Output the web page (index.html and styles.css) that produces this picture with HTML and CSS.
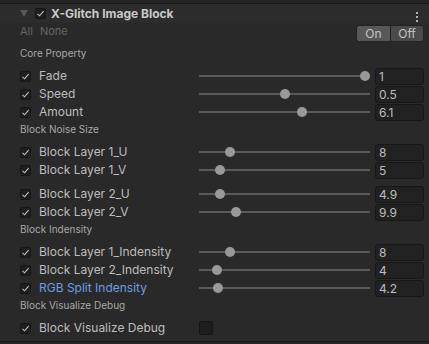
FILE: index.html
```html
<!DOCTYPE html>
<html lang="en">
<head>
    <meta charset="UTF-8">
    <title>X-Glitch Image Block</title>
    <link rel="stylesheet" href="styles.css">
</head>
<body>
    <div class="panel">
        <div class="header">
            <span class="foldout"></span>
            <span class="check"><svg viewBox="0 0 11 11"><path d="M2.5 5.8 L4.6 7.8 L8.6 3.2"/></svg></span>
            <span class="title">X-Glitch Image Block</span>
            <span class="kebab"><i></i><i></i><i></i></span>
        </div>

        <div class="toolbar">
            <div class="links"><span>All</span><span>None</span></div>
            <div class="toggle"><span class="on">On</span><span class="off">Off</span></div>
        </div>

        <div class="section">Core Property</div>
        <div class="row">
            <span class="check"><svg viewBox="0 0 11 11"><path d="M2.5 5.8 L4.6 7.8 L8.6 3.2"/></svg></span>
            <span class="label">Fade</span>
            <div class="slider"><span class="thumb" style="--v:1"></span></div>
            <div class="field">1</div>
        </div>
        <div class="row">
            <span class="check"><svg viewBox="0 0 11 11"><path d="M2.5 5.8 L4.6 7.8 L8.6 3.2"/></svg></span>
            <span class="label">Speed</span>
            <div class="slider"><span class="thumb" style="--v:0.5"></span></div>
            <div class="field">0.5</div>
        </div>
        <div class="row">
            <span class="check"><svg viewBox="0 0 11 11"><path d="M2.5 5.8 L4.6 7.8 L8.6 3.2"/></svg></span>
            <span class="label">Amount</span>
            <div class="slider"><span class="thumb" style="--v:0.61"></span></div>
            <div class="field">6.1</div>
        </div>

        <div class="section">Block Noise Size</div>
        <div class="row">
            <span class="check"><svg viewBox="0 0 11 11"><path d="M2.5 5.8 L4.6 7.8 L8.6 3.2"/></svg></span>
            <span class="label">Block Layer 1_U</span>
            <div class="slider"><span class="thumb" style="--v:0.16"></span></div>
            <div class="field">8</div>
        </div>
        <div class="row">
            <span class="check"><svg viewBox="0 0 11 11"><path d="M2.5 5.8 L4.6 7.8 L8.6 3.2"/></svg></span>
            <span class="label">Block Layer 1_V</span>
            <div class="slider"><span class="thumb" style="--v:0.1"></span></div>
            <div class="field">5</div>
        </div>
        <div class="row spaced">
            <span class="check"><svg viewBox="0 0 11 11"><path d="M2.5 5.8 L4.6 7.8 L8.6 3.2"/></svg></span>
            <span class="label">Block Layer 2_U</span>
            <div class="slider"><span class="thumb" style="--v:0.098"></span></div>
            <div class="field">4.9</div>
        </div>
        <div class="row">
            <span class="check"><svg viewBox="0 0 11 11"><path d="M2.5 5.8 L4.6 7.8 L8.6 3.2"/></svg></span>
            <span class="label">Block Layer 2_V</span>
            <div class="slider"><span class="thumb" style="--v:0.198"></span></div>
            <div class="field">9.9</div>
        </div>

        <div class="section">Block Indensity</div>
        <div class="row">
            <span class="check"><svg viewBox="0 0 11 11"><path d="M2.5 5.8 L4.6 7.8 L8.6 3.2"/></svg></span>
            <span class="label">Block Layer 1_Indensity</span>
            <div class="slider"><span class="thumb" style="--v:0.16"></span></div>
            <div class="field">8</div>
        </div>
        <div class="row">
            <span class="check"><svg viewBox="0 0 11 11"><path d="M2.5 5.8 L4.6 7.8 L8.6 3.2"/></svg></span>
            <span class="label">Block Layer 2_Indensity</span>
            <div class="slider"><span class="thumb" style="--v:0.08"></span></div>
            <div class="field">4</div>
        </div>
        <div class="row">
            <span class="check"><svg viewBox="0 0 11 11"><path d="M2.5 5.8 L4.6 7.8 L8.6 3.2"/></svg></span>
            <span class="label link">RGB Split Indensity</span>
            <div class="slider"><span class="thumb" style="--v:0.084"></span></div>
            <div class="field">4.2</div>
        </div>

        <div class="section">Block Visualize Debug</div>
        <div class="row last">
            <span class="check"><svg viewBox="0 0 11 11"><path d="M2.5 5.8 L4.6 7.8 L8.6 3.2"/></svg></span>
            <span class="label">Block Visualize Debug</span>
            <span class="toggle-box"></span>
        </div>
    </div>
</body>
</html>
```

FILE: styles.css
```css
body {
    margin: 0;
    background-color: #262626;
    font-family: Inter, "Noto Sans", sans-serif;
    color: #bdbdbd;
}
.panel {
    margin-top: 3px;
    border-top: 1px solid #1a1a1a;
    border-bottom: 1px solid #1a1a1a;
    background-color: #292929;
    padding-bottom: 4px;
}
.header {
    display: flex;
    align-items: center;
    height: 19px;
    padding-left: 20px;
    background-color: #2c2c2c;
}
.foldout {
    width: 0;
    height: 0;
    border-left: 4px solid transparent;
    border-right: 4px solid transparent;
    border-top: 7px solid #585858;
    margin-right: 7px;
}
.check {
    display: inline-block;
    box-sizing: border-box;
    width: 11px;
    height: 11px;
    background-color: #1e1e1e;
    border: 1px solid #161616;
    border-radius: 2px;
    flex-shrink: 0;
}
.check svg {
    display: block;
    width: 11px;
    height: 11px;
    margin: -1px;
    fill: none;
    stroke: #c0c0c0;
    stroke-width: 1.1;
}
.title {
    margin-left: 5px;
    font-size: 12px;
    font-weight: 700;
    color: #c8c8c8;
    flex: 1;
}
.kebab {
    display: flex;
    flex-direction: column;
    gap: 2px;
    margin: 6px 11px 0 0;
}
.kebab i {
    display: block;
    width: 2px;
    height: 2px;
    background-color: #b0b0b0;
}
.toolbar {
    display: flex;
    justify-content: space-between;
    align-items: flex-start;
    height: 22px;
    padding: 0 5px 0 20px;
}
.links {
    display: flex;
    gap: 7px;
    font-size: 11px;
    line-height: 14px;
    margin-top: 1px;
    color: #666666;
}
.toggle {
    display: flex;
    margin-top: 2px;
    height: 17px;
    font-size: 12px;
    line-height: 15px;
    color: #c4c4c4;
}
.toggle span {
    text-align: center;
    background-color: #515151;
    border: 1px solid #232323;
    box-sizing: border-box;
}
.toggle .on {
    width: 34px;
    border-radius: 3px 0 0 3px;
    background-color: #585858;
    border-right: none;
}
.toggle .off {
    width: 34px;
    border-radius: 0 3px 3px 0;
    background-color: #4a4a4a;
}
.section {
    height: 18px;
    line-height: 17px;
    padding-left: 20px;
    font-size: 10px;
    color: #a8a8a8;
    margin-bottom: 4px;
}
.row {
    display: flex;
    align-items: center;
    height: 18px;
    padding-left: 20px;
}
.row.spaced {
    margin-top: 6px;
}
.label {
    width: 160px;
    margin-left: 8px;
    font-size: 12px;
    line-height: 16px;
    white-space: nowrap;
}
.label.link {
    color: #6c9ce2;
}
.slider {
    position: relative;
    width: 171px;
    height: 18px;
}
.slider::before {
    content: "";
    position: absolute;
    left: 0;
    right: 0;
    top: 8px;
    height: 2px;
    background-color: #5a5a5a;
}
.thumb {
    position: absolute;
    top: 4px;
    left: calc((100% - 10px) * var(--v));
    width: 10px;
    height: 10px;
    border-radius: 50%;
    background-color: #999999;
}
.field {
    box-sizing: border-box;
    width: 49px;
    height: 17px;
    margin-left: 5px;
    padding-left: 3px;
    font-size: 12px;
    line-height: 15px;
    background-color: #212121;
    border: 1px solid #171717;
    border-radius: 3px;
}
.toggle-box {
    box-sizing: border-box;
    width: 14px;
    height: 14px;
    background-color: #1e1e1e;
    border: 1px solid #161616;
    border-radius: 2px;
}
```
